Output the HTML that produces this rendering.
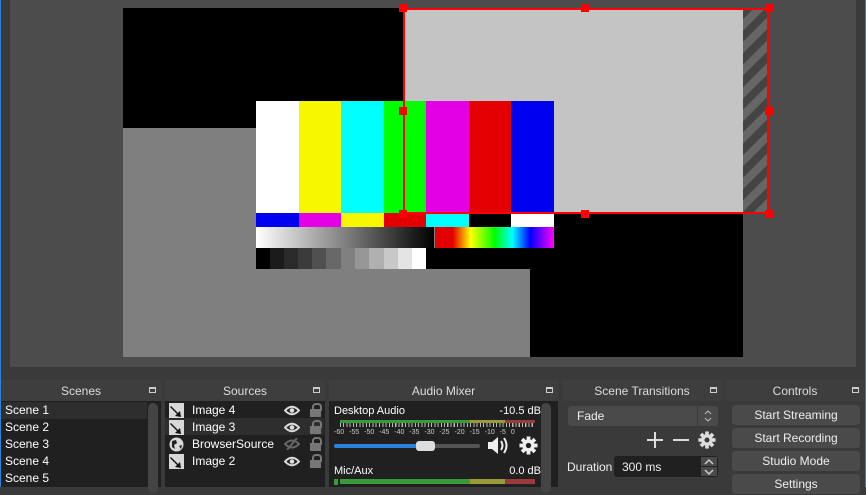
<!DOCTYPE html>
<html><head><meta charset="utf-8"><style>
*{margin:0;padding:0;box-sizing:border-box}
body{width:866px;height:487px;background:#3a3a3a;position:relative;overflow:hidden;font-family:"Liberation Sans",sans-serif;font-size:12px;color:#fff}
.a{position:absolute}
.hdr{position:absolute;top:380px;height:21px;background:#3e3e3e;color:#ddd;text-align:center;line-height:22px;font-size:12px}
.hdr i{position:absolute;right:5px;top:7px;width:7px;height:6px;border:1px solid #ccc;border-top-width:2px}
.list{position:absolute;top:401px;height:86px;background:#202020}
.it{position:absolute;height:17px;line-height:17px;font-size:12px}
.btn{position:absolute;left:732px;width:128px;height:20px;background:#4a4a4a;border-radius:3px;text-align:center;line-height:21px;color:#eee}
.lock{position:absolute;width:11px;height:8px;background:#777}
.lock:before{content:"";position:absolute;left:2px;top:-6px;width:6px;height:6px;border:2px solid #777;border-bottom:none;border-radius:4px 4px 0 0}
svg{position:absolute}
</style></head><body>
<div class="a" style="left:0;top:0;width:1px;height:487px;background:#2a82da"></div>
<div class="a" style="left:10px;top:0;width:846px;height:367px;background:#4c4c4c"></div>
<div class="a" style="left:123px;top:8px;width:620px;height:349px;background:#000"></div>
<div class="a" style="left:123px;top:128px;width:407px;height:229px;background:#7f7f7f"></div>
<div class="a" style="left:403px;top:8px;width:340px;height:205px;background:#c4c4c4"></div>
<div class="a" style="left:743px;top:8px;width:25px;height:205px;background:repeating-linear-gradient(135deg,#444 0 8px,#666 8px 16px)"></div>
<div class="a" style="left:256px;top:101px;width:298px;height:112px;display:flex">
<div style="flex:1;background:#fff"></div><div style="flex:1;background:#f7f700"></div><div style="flex:1;background:#0ff"></div><div style="flex:1;background:#0f0"></div><div style="flex:1;background:#e400e4"></div><div style="flex:1;background:#e40000"></div><div style="flex:1;background:#0000f0"></div></div>
<div class="a" style="left:256px;top:213px;width:298px;height:14px;display:flex">
<div style="flex:1;background:#0000f0"></div><div style="flex:1;background:#e400e4"></div><div style="flex:1;background:#f7f700"></div><div style="flex:1;background:#e40000"></div><div style="flex:1;background:#0ff"></div><div style="flex:1;background:#000"></div><div style="flex:1;background:#fff"></div></div>
<div class="a" style="left:256px;top:227px;width:178px;height:21px;background:linear-gradient(90deg,#fff,#000)"></div>
<div class="a" style="left:435px;top:227px;width:119px;height:21px;background:linear-gradient(90deg,#e40000 0%,#e40000 15%,#ff0 30%,#0f0 50%,#0ff 65%,#00f 80%,#f0f 100%)"></div>
<div class="a" style="left:256px;top:248px;width:298px;height:21px;background:#000;display:flex">
<div style="width:14px;background:#000"></div><div style="width:14px;background:#1b1b1b"></div><div style="width:14px;background:#2a2a2a"></div><div style="width:14px;background:#3b3b3b"></div><div style="width:14px;background:#505050"></div><div style="width:15px;background:#686868"></div><div style="width:14px;background:#808080"></div><div style="width:14px;background:#969696"></div><div style="width:15px;background:#b0b0b0"></div><div style="width:14px;background:#c8c8c8"></div><div style="width:14px;background:#e4e4e4"></div><div style="width:14px;background:#fff"></div></div>
<div class="a" style="left:403px;top:8px;width:366px;height:206px;border:2px solid #f00"></div>
<div class="a" style="left:399px;top:4px;width:8px;height:8px;background:#f00"></div>
<div class="a" style="left:581px;top:4px;width:8px;height:8px;background:#f00"></div>
<div class="a" style="left:765px;top:4px;width:8px;height:8px;background:#f00"></div>
<div class="a" style="left:399px;top:107px;width:8px;height:8px;background:#f00"></div>
<div class="a" style="left:765px;top:107px;width:8px;height:8px;background:#f00"></div>
<div class="a" style="left:399px;top:210px;width:8px;height:8px;background:#f00"></div>
<div class="a" style="left:581px;top:210px;width:8px;height:8px;background:#f00"></div>
<div class="a" style="left:765px;top:210px;width:8px;height:8px;background:#f00"></div>
<div class="hdr" style="left:1px;width:160px">Scenes<i></i></div>
<div class="hdr" style="left:165px;width:160px">Sources<i></i></div>
<div class="hdr" style="left:329px;width:229px">Audio Mixer<i></i></div>
<div class="hdr" style="left:562px;width:160px">Scene Transitions<i></i></div>
<div class="hdr" style="left:726px;width:138px">Controls<i></i></div>
<div class="list" style="left:1px;width:160px">
<div class="it" style="left:0;top:1px;width:146px;background:#2e2e2e;padding-left:4px">Scene 1</div>
<div class="it" style="left:4px;top:18px">Scene 2</div>
<div class="it" style="left:4px;top:35px">Scene 3</div>
<div class="it" style="left:4px;top:52px">Scene 4</div>
<div class="it" style="left:4px;top:69px">Scene 5</div>
<div class="a" style="left:147px;top:2px;width:10px;height:90px;background:#444;border-radius:5px"></div>
</div>
<div class="list" style="left:165px;width:160px">
<div class="a" style="left:0;top:17px;width:159px;height:17px;background:#2e2e2e"></div>
<svg style="left:4px;top:2px" width="15" height="15"><rect width="15" height="15" fill="#d8d8d8"/><path d="M2 3 L9 10 L11 8 L12 14 L6 13 L8 11 L1 4Z" fill="#111"/></svg>
<svg style="left:4px;top:19px" width="15" height="15"><rect width="15" height="15" fill="#d8d8d8"/><path d="M2 3 L9 10 L11 8 L12 14 L6 13 L8 11 L1 4Z" fill="#111"/></svg>
<svg style="left:4px;top:36px" width="15" height="15"><circle cx="7.5" cy="7.5" r="7" fill="#d8d8d8"/><path d="M3 4 L7 3 L8 6 L5 8 L6 12 L3 10Z M10 9 L13 8 L12 12Z" fill="#202020"/></svg>
<svg style="left:4px;top:53px" width="15" height="15"><rect width="15" height="15" fill="#d8d8d8"/><path d="M2 3 L9 10 L11 8 L12 14 L6 13 L8 11 L1 4Z" fill="#111"/></svg>
<div class="it" style="left:27px;top:1px">Image 4</div>
<div class="it" style="left:27px;top:18px">Image 3</div>
<div class="it" style="left:27px;top:35px">BrowserSource</div>
<div class="it" style="left:27px;top:52px">Image 2</div>
<svg style="left:119px;top:4px" width="16" height="11"><path d="M1 5.5 Q8 -2 15 5.5 Q8 13 1 5.5Z" fill="none" stroke="#ddd" stroke-width="2"/><circle cx="8" cy="5.5" r="2.3" fill="#ddd"/></svg>
<svg style="left:119px;top:21px" width="16" height="11"><path d="M1 5.5 Q8 -2 15 5.5 Q8 13 1 5.5Z" fill="none" stroke="#ddd" stroke-width="2"/><circle cx="8" cy="5.5" r="2.3" fill="#ddd"/></svg>
<svg style="left:119px;top:37px" width="16" height="12"><path d="M1 6 Q8 -1 15 6 Q8 13 1 6Z" fill="none" stroke="#666" stroke-width="2"/><path d="M3 12 L13 0" stroke="#666" stroke-width="2"/></svg>
<svg style="left:119px;top:55px" width="16" height="11"><path d="M1 5.5 Q8 -2 15 5.5 Q8 13 1 5.5Z" fill="none" stroke="#ddd" stroke-width="2"/><circle cx="8" cy="5.5" r="2.3" fill="#ddd"/></svg>
<div class="lock" style="left:145px;top:8px"></div>
<div class="lock" style="left:145px;top:25px"></div>
<div class="lock" style="left:145px;top:42px"></div>
<div class="lock" style="left:145px;top:59px"></div>
</div>
<div class="list" style="left:329px;width:229px">
<div class="it" style="left:5px;top:2px;font-size:11px">Desktop Audio</div>
<div class="it" style="right:17px;top:2px;font-size:11px">-10.5 dB</div>
<div class="a" style="left:11px;top:19px;width:130px;height:3px;background:#3a9a3a"></div>
<div class="a" style="left:141px;top:19px;width:35px;height:3px;background:#9a9a3a"></div>
<div class="a" style="left:176px;top:19px;width:30px;height:3px;background:#9a3a3a"></div>
<div class="a" style="left:11px;top:22px;width:195px;height:4px;background:repeating-linear-gradient(90deg,#bbb 0 1px,transparent 1px 3.25px)"></div>
<div class="it" style="left:5px;top:23px;font-size:7px;color:#ccc;word-spacing:3px;white-space:nowrap">-60 -55 -50 -45 -40 -35 -30 -25 -20 -15 -10 -5 0</div>
<div class="a" style="left:5px;top:43px;width:84px;height:4px;background:#2a82da;border-radius:2px"></div>
<div class="a" style="left:89px;top:43px;width:62px;height:4px;background:#555;border-radius:2px"></div>
<div class="a" style="left:87px;top:40px;width:19px;height:10px;background:#ddd;border-radius:3px"></div>
<svg style="left:158px;top:35px" width="24" height="19"><path d="M1 6 H5 L11 1 V18 L5 13 H1Z" fill="#eee"/><path d="M14 5 Q17 9.5 14 14 M17 2 Q22 9.5 17 17" fill="none" stroke="#eee" stroke-width="2"/></svg>
<svg style="left:190px;top:35px" width="19" height="19" viewBox="-10 -10 20 20"><g fill="#eee"><circle r="6.5"/><rect x="-2" y="-9.5" width="4" height="19"/><rect x="-9.5" y="-2" width="19" height="4"/><rect x="-2" y="-9.5" width="4" height="19" transform="rotate(45)"/><rect x="-2" y="-9.5" width="4" height="19" transform="rotate(-45)"/></g><circle r="2.8" fill="#202020"/></svg>
<div class="it" style="left:5px;top:62px;font-size:11px">Mic/Aux</div>
<div class="it" style="right:17px;top:62px;font-size:11px">0.0 dB</div>
<div class="a" style="left:5px;top:78px;width:4px;height:6px;background:#3a9a3a"></div>
<div class="a" style="left:11px;top:78px;width:130px;height:5px;background:#3a9a3a"></div>
<div class="a" style="left:141px;top:78px;width:35px;height:5px;background:#9a9a3a"></div>
<div class="a" style="left:176px;top:78px;width:30px;height:5px;background:#9a3a3a"></div>
<div class="a" style="left:212px;top:2px;width:10px;height:90px;background:#444;border-radius:5px"></div>
</div>
<div class="a" style="left:562px;top:401px;width:160px;height:86px;background:#3a3a3a"></div>
<div class="a" style="left:568px;top:406px;width:150px;height:20px;background:#4a4a4a;border-radius:3px"></div>
<div class="a" style="left:697px;top:406px;width:1px;height:20px;background:#3a3a3a"></div>
<div class="it" style="left:577px;top:408px;color:#eee">Fade</div>
<svg style="left:703px;top:409px" width="10" height="14"><path d="M2 5 L5 2 L8 5 M2 9 L5 12 L8 9" fill="none" stroke="#bbb"/></svg>
<div class="a" style="left:647px;top:439px;width:16px;height:2px;background:#ddd"></div>
<div class="a" style="left:654px;top:432px;width:2px;height:16px;background:#ddd"></div>
<div class="a" style="left:673px;top:439px;width:16px;height:2px;background:#ddd"></div>
<svg style="left:698px;top:431px" width="18" height="18" viewBox="-10 -10 20 20"><g fill="#ddd"><circle r="6.5"/><rect x="-2" y="-9.5" width="4" height="19"/><rect x="-9.5" y="-2" width="19" height="4"/><rect x="-2" y="-9.5" width="4" height="19" transform="rotate(45)"/><rect x="-2" y="-9.5" width="4" height="19" transform="rotate(-45)"/></g><circle r="2.8" fill="#3a3a3a"/></svg>
<div class="it" style="left:567px;top:459px;color:#eee">Duration</div>
<div class="a" style="left:614px;top:456px;width:104px;height:21px;background:#202020;border-radius:3px"></div>
<div class="it" style="left:622px;top:459px;color:#eee">300 ms</div>
<div class="a" style="left:701px;top:457px;width:16px;height:9px;background:#4a4a4a"></div>
<div class="a" style="left:701px;top:467px;width:16px;height:9px;background:#4a4a4a"></div>
<svg style="left:703px;top:458px" width="12" height="18"><path d="M2 6 L6 2 L10 6 M2 12 L6 16 L10 12" fill="none" stroke="#ccc" stroke-width="1.5"/></svg>
<div class="btn" style="top:405px">Start Streaming</div>
<div class="btn" style="top:428px">Start Recording</div>
<div class="btn" style="top:451px">Studio Mode</div>
<div class="btn" style="top:474px">Settings</div>
<div class="a" style="left:865px;top:0;width:1px;height:487px;background:#2a82da"></div>
</body></html>
